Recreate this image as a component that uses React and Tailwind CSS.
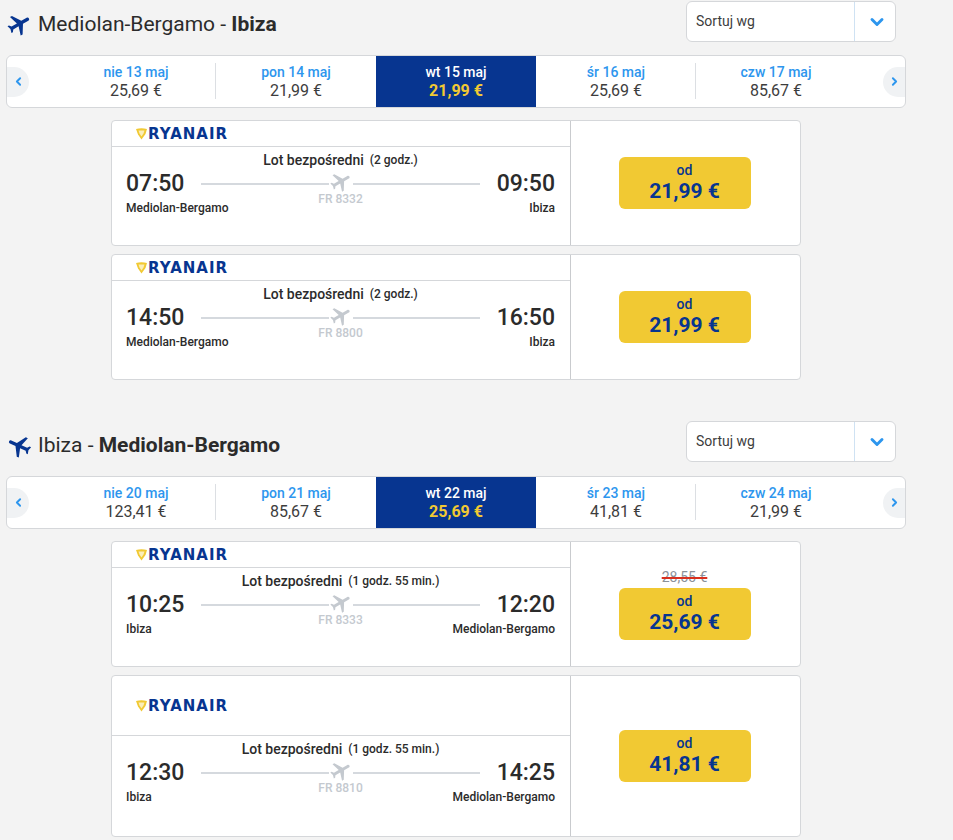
import React from 'react';
import { MdFlight } from 'react-icons/md';
import { ChevronLeft, ChevronRight, ChevronDown } from 'lucide-react';

const Logo = () => (
  <div className="flex items-center pl-[24px] h-full pt-[1px]">
    <svg width="11" height="12" viewBox="0 0 11 12" className="mr-[1px]">
      <path d="M0 1 C3.5 0 7.5 0 11 1 L9.5 6 L5.5 11.5 L2 6.5 Z" fill="#f1c933" />
      <path d="M2.5 2.5 L8.5 2.5 L7.5 5.5 L5.5 8.5 L3.5 5.5 Z" fill="#fbeeb8" />
    </svg>
    <span className="text-[#073590] font-['DejaVu_Sans',sans-serif] font-bold text-[15px] leading-none tracking-[1px]">RYANAIR</span>
  </div>
);

const DateTab = ({ label, price, active, sep }) => (
  <div className={`w-[160px] shrink-0 h-full flex items-center justify-center relative ${active ? 'bg-[#073590]' : ''}`}>
    {sep && <div className="absolute right-0 top-[7px] bottom-[8px] w-px bg-[#dcdfe3]" />}
    <div className="text-center">
      <div className={`text-[14px] leading-[18px] font-medium ${active ? 'text-white font-bold' : 'text-[#2d96ee]'}`}>{label}</div>
      <div className={`text-[16px] leading-[19px] ${active ? 'text-[#f1c933] font-bold' : 'text-[#3d3d3d]'}`}>{price}</div>
    </div>
  </div>
);

const DateStrip = ({ days }) => (
  <div className="ml-[6px] w-[900px] h-[53px] bg-white border border-[#d5d7da] rounded-[6px] flex items-center overflow-hidden">
    <div className="w-[22px] h-[30px] bg-[#f0f2f4] rounded-r-full flex items-center justify-center shrink-0">
      <ChevronLeft size={13} strokeWidth={3.5} className="text-[#2d96ee]" />
    </div>
    <div className="h-full flex ml-[27px]">
      {days.map((d, i) => (
        <DateTab key={d.label} {...d} sep={i === 0 || i === 3} />
      ))}
    </div>
    <div className="ml-auto w-[22px] h-[30px] bg-[#f0f2f4] rounded-l-full flex items-center justify-center shrink-0">
      <ChevronRight size={13} strokeWidth={3.5} className="text-[#2d96ee]" />
    </div>
  </div>
);

const SectionHead = ({ children, flip, mt }) => (
  <div className={`flex items-start h-[55px] ${mt}`}>
    <div className={`w-[686px] flex items-center ${flip ? 'pt-[9px]' : 'pt-[8px]'}`}>
      <MdFlight size={27} className={`ml-[6px] mr-[5px] text-[#073590] ${flip ? 'rotate-[-65deg]' : 'rotate-[60deg]'}`} />
      <div className="text-[21px] leading-[30px] text-[#2b2b2b]">{children}</div>
    </div>
    <div className="w-[210px] h-[41px] bg-white border border-[#d5d7da] rounded-[6px] flex items-center">
      <div className="flex-1 pl-[9px] text-[14px] text-[#3d3d3d]">Sortuj wg</div>
      <div className="w-[41px] h-full border-l border-[#cfe2f3] flex items-center justify-center">
        <ChevronDown size={20} strokeWidth={3.5} className="ml-[4px] text-[#2d96ee]" />
      </div>
    </div>
  </div>
);

const FlightCard = ({ f }) => (
  <div className={`ml-[111px] w-[690px] ${f.tall ? 'h-[162px]' : 'h-[126px]'} bg-white border border-[#d5d7da] rounded-[4px] flex`}>
    <div className="w-[459px] border-r border-[#c9cbce] flex flex-col">
      <div className={`${f.tall ? 'h-[60px]' : 'h-[26px]'} border-b border-[#d5d7da] shrink-0`}>
        <Logo />
      </div>
      <div className="pl-[14px] pr-[15px] pt-[3px]">
        <div className="flex justify-center items-baseline text-[#2b2b2b] h-[19px]">
          <span className="text-[14px] font-medium">Lot bezpośredni</span>
          <span className="text-[12px] font-medium ml-[6px] relative -top-[1px]">({f.dur})</span>
        </div>
        <div className="flex items-center h-[28px] mt-[1px]">
          <div className="text-[23px] leading-[28px] font-medium text-[#2b2b2b] w-[75px]">{f.dep}</div>
          <div className="flex-1 flex items-center">
            <div className="flex-1 h-[2px] bg-[#d5d9de]" />
            <MdFlight size={24} className="-mt-[4px] text-[#c4c9cf] rotate-[60deg]" />
            <div className="flex-1 h-[2px] bg-[#d5d9de]" />
          </div>
          <div className="text-[23px] leading-[28px] font-medium text-[#2b2b2b] w-[75px] text-right">{f.arr}</div>
        </div>
        <div className="mt-[2px] flex justify-between items-start h-[16px] text-[12px] leading-[16px] font-medium text-[#2b2b2b] relative">
          <span>{f.from}</span>
          <span className="absolute left-0 right-0 text-center text-[#c4c9cf] top-[-9px]">{f.code}</span>
          <span>{f.to}</span>
        </div>
      </div>
    </div>
    <div className="flex-1 flex flex-col items-center justify-center pr-[2px]">
      {f.old && <div className="text-[14px] leading-[18px] text-[#8b9199] line-through decoration-2 decoration-[#d9301f] mb-[2px]">{f.old}</div>}
      <div className="w-[132px] h-[52px] pb-[2px] bg-[#f1c933] rounded-[6px] flex flex-col items-center justify-center text-[#073590]">
        <div className="text-[14px] leading-[17px] font-medium">od</div>
        <div className="text-[21px] leading-[24px] font-bold">{f.price}</div>
      </div>
    </div>
  </div>
);

const out = [
  { label: 'nie 13 maj', price: '25,69 €' },
  { label: 'pon 14 maj', price: '21,99 €' },
  { label: 'wt 15 maj', price: '21,99 €', active: true },
  { label: 'śr 16 maj', price: '25,69 €' },
  { label: 'czw 17 maj', price: '85,67 €' },
];
const back = [
  { label: 'nie 20 maj', price: '123,41 €' },
  { label: 'pon 21 maj', price: '85,67 €' },
  { label: 'wt 22 maj', price: '25,69 €', active: true },
  { label: 'śr 23 maj', price: '41,81 €' },
  { label: 'czw 24 maj', price: '21,99 €' },
];

export default function App() {
  return (
    <div className="w-[953px] h-[840px] overflow-hidden bg-[#f3f3f3] font-['Roboto',sans-serif]">
      <SectionHead mt="pt-[1px]">
        Mediolan-Bergamo - <b className="font-bold">Ibiza</b>
      </SectionHead>
      <DateStrip days={out} />
      <div className="flex flex-col gap-[8px] mt-[12px]">
        <FlightCard f={{ dep: '07:50', arr: '09:50', from: 'Mediolan-Bergamo', to: 'Ibiza', code: 'FR 8332', dur: '2 godz.', price: '21,99 €' }} />
        <FlightCard f={{ dep: '14:50', arr: '16:50', from: 'Mediolan-Bergamo', to: 'Ibiza', code: 'FR 8800', dur: '2 godz.', price: '21,99 €' }} />
      </div>
      <SectionHead flip mt="mt-[41px]">
        Ibiza - <b className="font-bold">Mediolan-Bergamo</b>
      </SectionHead>
      <DateStrip days={back} />
      <div className="flex flex-col gap-[8px] mt-[12px]">
        <FlightCard f={{ dep: '10:25', arr: '12:20', from: 'Ibiza', to: 'Mediolan-Bergamo', code: 'FR 8333', dur: '1 godz. 55 min.', price: '25,69 €', old: '28,55 €' }} />
        <FlightCard f={{ dep: '12:30', arr: '14:25', from: 'Ibiza', to: 'Mediolan-Bergamo', code: 'FR 8810', dur: '1 godz. 55 min.', price: '41,81 €', tall: true }} />
      </div>
    </div>
  );
}
